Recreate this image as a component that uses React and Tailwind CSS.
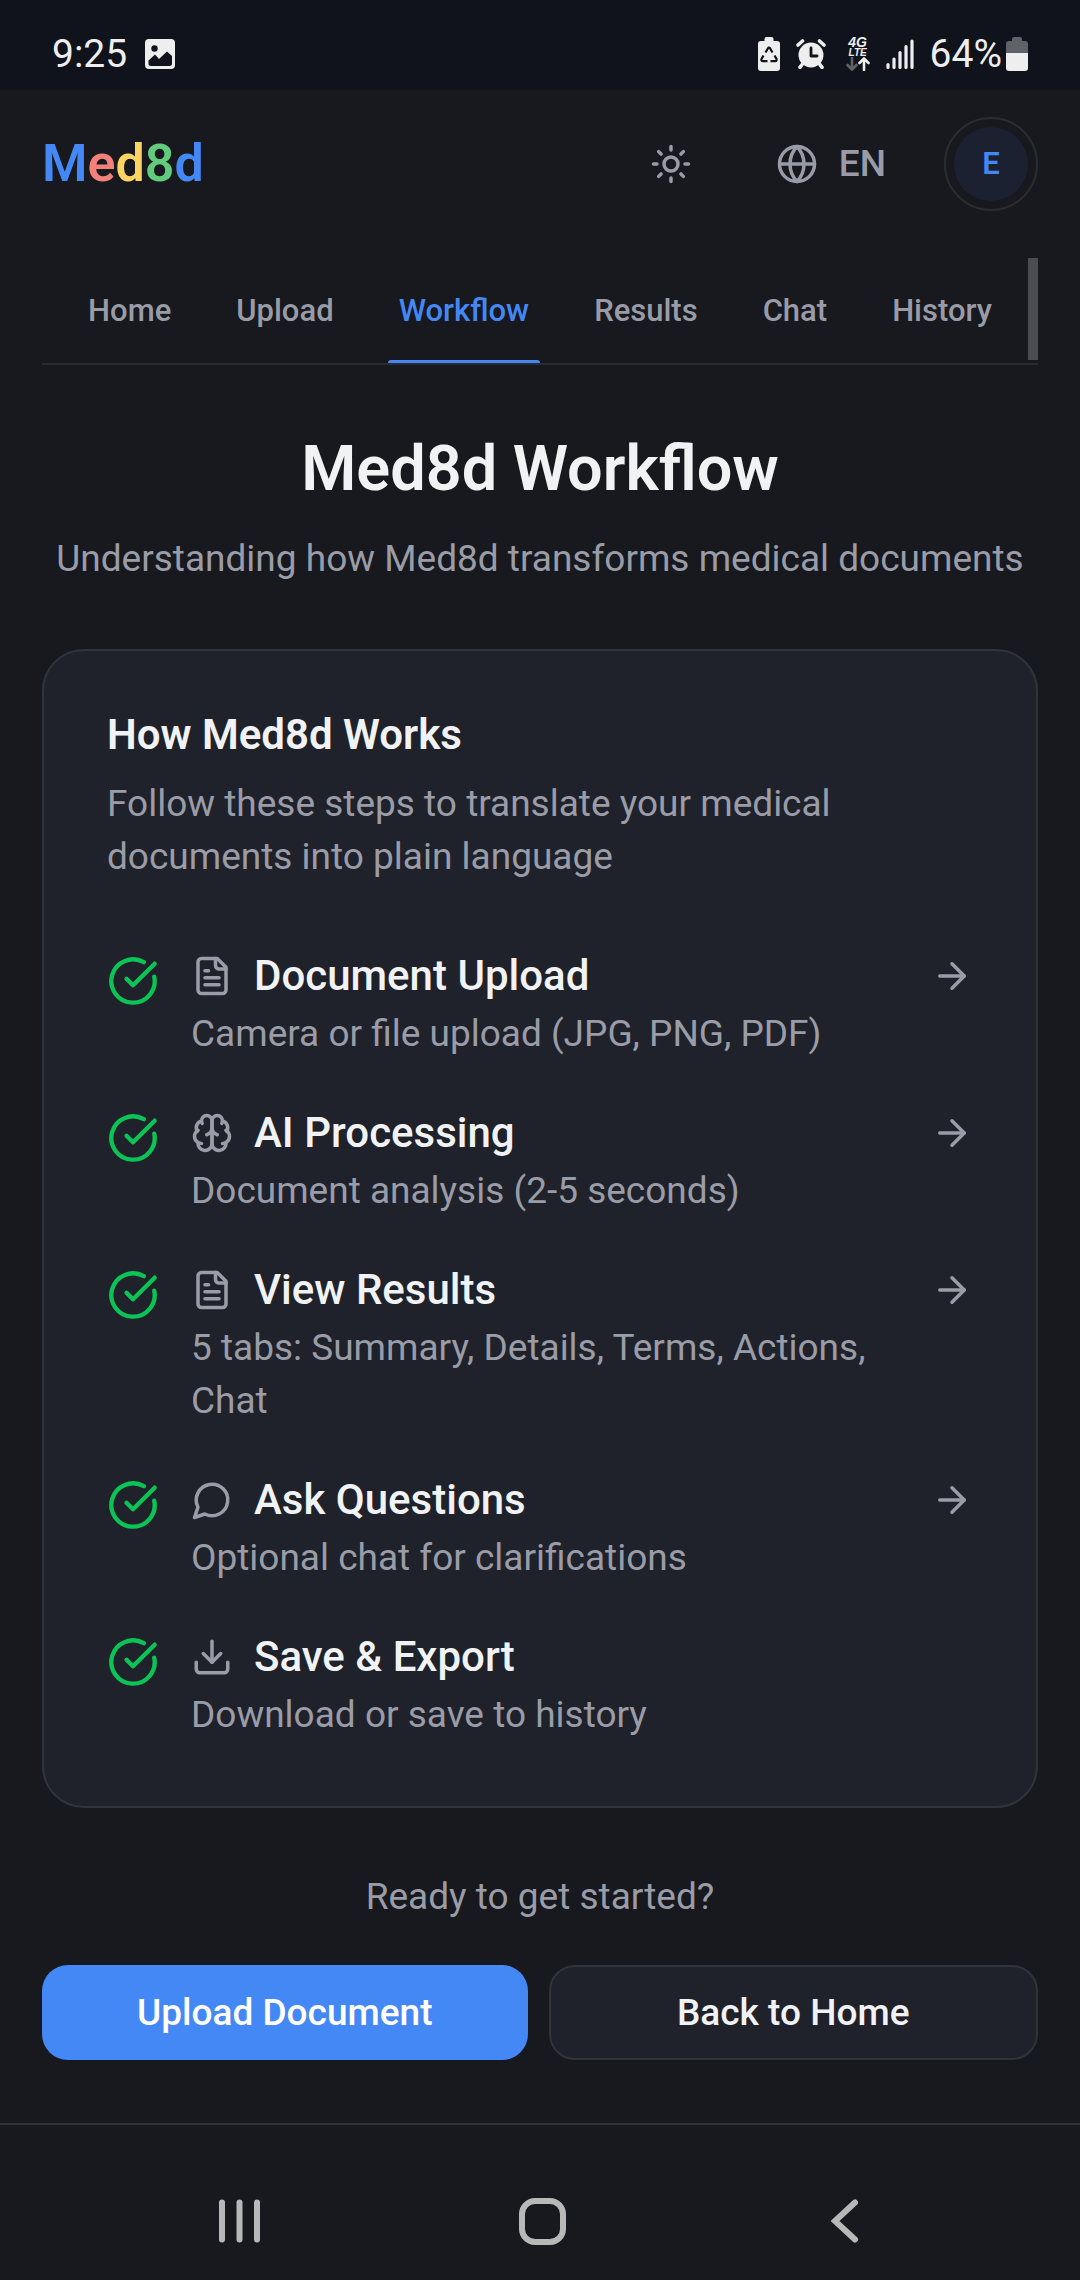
import React, { useState } from "react";
import { ArrowRight, CircleCheckBig, Download, Globe, Sun } from "lucide-react";

const LOGO = [
  { char: "M", color: "text-[#4488f5]" },
  { char: "e", color: "text-[#f28179]" },
  { char: "d", color: "text-[#fdd462]" },
  { char: "8", color: "text-[#61cd7c]" },
  { char: "d", color: "text-[#4488f5]" },
];

const TABS = ["Home", "Upload", "Workflow", "Results", "Chat", "History"];

// --- Icons ---
function LineIcon({ className, children }) {
  return (
    <svg
      viewBox="0 0 24 24"
      fill="none"
      stroke="currentColor"
      strokeWidth="2"
      strokeLinecap="round"
      strokeLinejoin="round"
      className={className}
      aria-hidden="true"
    >
      {children}
    </svg>
  );
}

function FileIcon({ className }) {
  return (
    <LineIcon className={className}>
      <path d="M15 2H6a2 2 0 0 0-2 2v16a2 2 0 0 0 2 2h12a2 2 0 0 0 2-2V7Z" />
      <path d="M14 2v4a2 2 0 0 0 2 2h4" />
      <path d="M10 9H8" />
      <path d="M16 13H8" />
      <path d="M16 17H8" />
    </LineIcon>
  );
}

function BrainIcon({ className }) {
  return (
    <LineIcon className={className}>
      <path d="M12 5a3 3 0 1 0-5.997.125 4 4 0 0 0-2.526 5.77 4 4 0 0 0 .556 6.588A4 4 0 1 0 12 18Z" />
      <path d="M12 5a3 3 0 1 1 5.997.125 4 4 0 0 1 2.526 5.77 4 4 0 0 1-.556 6.588A4 4 0 1 1 12 18Z" />
      <path d="M15 13a4.5 4.5 0 0 1-3-4 4.5 4.5 0 0 1-3 4" />
      <path d="M17.599 6.5a3 3 0 0 0 .399-1.375" />
      <path d="M6.003 5.125A3 3 0 0 0 6.401 6.5" />
      <path d="M3.477 10.896a4 4 0 0 1 .585-.396" />
      <path d="M19.938 10.5a4 4 0 0 1 .585.396" />
      <path d="M6 18a4 4 0 0 1-1.967-.516" />
      <path d="M19.967 17.484A4 4 0 0 1 18 18" />
    </LineIcon>
  );
}

function ChatIcon({ className }) {
  return (
    <LineIcon className={className}>
      <path d="M7.9 20A9 9 0 1 0 4 16.1L2 22Z" />
    </LineIcon>
  );
}

const STEPS = [
  { title: "Document Upload", text: "Camera or file upload (JPG, PNG, PDF)", icon: FileIcon },
  { title: "AI Processing", text: "Document analysis (2-5 seconds)", icon: BrainIcon },
  { title: "View Results", text: "5 tabs: Summary, Details, Terms, Actions, Chat", icon: FileIcon },
  { title: "Ask Questions", text: "Optional chat for clarifications", icon: ChatIcon },
  { title: "Save & Export", text: "Download or save to history", icon: Download },
];

// --- Phone status bar ---
function StatusBar() {
  return (
    <div className="flex h-[90px] items-center justify-between bg-[#10131b] px-[52px] pt-[18px] text-[39px] leading-[46px] text-[#eeeeee]">
      <div className="flex items-center gap-[18px]">
        <span>9:25</span>
        <svg viewBox="0 0 30 30" className="h-[30px] w-[30px]" aria-hidden="true">
          <rect width="30" height="30" rx="4" fill="currentColor" />
          <circle cx="9.5" cy="9.5" r="3.2" fill="#10131b" />
          <path d="M3.500 21.500L10 15.500L14 20L22 12.500L27 17V24.500A2.500 2.500 0 0 1 24.500 27H6A2.500 2.500 0 0 1 3.500 24.500Z" fill="#10131b" />
        </svg>
      </div>

      <div className="flex items-center">
        <svg viewBox="0 0 22 34" className="mr-4 h-[34px] w-[22px]" aria-hidden="true">
          <path d="M6.500 3V2a2 2 0 0 1 2-2h5a2 2 0 0 1 2 2v2H19a3 3 0 0 1 3 3v24a3 3 0 0 1-3 3H3a3 3 0 0 1-3-3V7a3 3 0 0 1 3-3h3.500Z" fill="currentColor" />
          <g fill="none" stroke="#10131b" strokeWidth="2.200" strokeLinejoin="round">
            <path d="M7.500 15.500L10 11.200q1-1.400 2 0l2.500 4.300" />
            <path d="M16.500 18.500l2 3.500q.600 2-1.500 2.200h-4.500" />
            <path d="M9.500 24.200H5q-2.100-.200-1.500-2.200l2-3.500" />
          </g>
        </svg>
        <svg viewBox="0 0 30 30" className="mr-5 h-[30px] w-[30px]" aria-hidden="true">
          <circle cx="15" cy="16" r="12.500" fill="currentColor" />
          <g stroke="currentColor" strokeWidth="3.600" strokeLinecap="round">
            <path d="M2 6L6.500 2" />
            <path d="M28 6L23.500 2" />
            <path d="M6.500 25L4 28.300" />
            <path d="M23.500 25L26 28.300" />
          </g>
          <path d="M15 9v8h6" fill="none" stroke="#10131b" strokeWidth="2.800" strokeLinecap="round" strokeLinejoin="round" />
        </svg>
        <div className="mr-4 flex w-[24px] flex-col items-center font-['Liberation_Sans',sans-serif] font-bold italic">
          <span className="text-[14px] leading-[11px]">4G</span>
          <span className="text-[10px] leading-[9px]">LTE</span>
          <svg viewBox="0 0 24 14" className="h-[14px] w-[24px]" aria-hidden="true">
            <g fill="none" strokeWidth="2.600" strokeLinecap="round" strokeLinejoin="round">
              <path d="M6 1v11M1.500 8L6 12.500L10.500 8" stroke="#606269" />
              <path d="M18 13V2M13.500 6L18 1.500L22.500 6" stroke="currentColor" />
            </g>
          </svg>
        </div>
        <svg viewBox="0 0 28 32" className="mr-4 h-[32px] w-[28px]" aria-hidden="true">
          <g stroke="currentColor" strokeWidth="3.200" strokeLinecap="round">
            <path d="M2 29.500V26.500" />
            <path d="M8 29.500V21" />
            <path d="M14 29.500V14.500" />
            <path d="M20 29.500V8.500" />
            <path d="M26 29.500V3" />
          </g>
        </svg>
        <span>64%</span>
        <svg viewBox="0 0 22 34" className="ml-1 h-[34px] w-[22px]" aria-hidden="true">
          <path d="M6 3V2a2 2 0 0 1 2-2h6a2 2 0 0 1 2 2v2h3a3 3 0 0 1 3 3v9H0V7a3 3 0 0 1 3-3h3Z" fill="#606269" />
          <path d="M0 16h22v15a3 3 0 0 1-3 3H3a3 3 0 0 1-3-3Z" fill="currentColor" />
        </svg>
      </div>
    </div>
  );
}

// --- App header ---
function Header() {
  return (
    <header className="flex h-[147px] items-center justify-between px-[42px]">
      <a href="#home" className="text-[52px] leading-[60px] font-semibold">
        {LOGO.map((part, i) => (
          <span key={i} className={part.color}>{part.char}</span>
        ))}
      </a>
      <div className="flex items-center text-[#999ca7]">
        <button type="button" aria-label="Toggle theme" className="p-[21px]">
          <Sun className="h-[42px] w-[42px]" />
        </button>
        <button type="button" className="ml-[21px] flex items-center gap-[21px] px-[42px] text-[37px] leading-[53px] font-medium">
          <Globe className="h-[42px] w-[42px]" />
          EN
        </button>
        <button
          type="button"
          aria-label="Account"
          className="ml-4 flex h-[94px] w-[94px] items-center justify-center rounded-full border-2 border-[#2b2d32]"
        >
          <span className="flex h-[74px] w-[74px] items-center justify-center rounded-full bg-[#1b2130] text-[31px] leading-[42px] font-semibold text-[#4488f5]">
            E
          </span>
        </button>
      </div>
    </header>
  );
}

function TabBar({ active, onSelect }) {
  return (
    <nav className="relative mx-[42px] mt-[21px] flex justify-center gap-[43px] border-b-2 border-[#292b30]">
      {TABS.map((tab) => (
        <button
          key={tab}
          type="button"
          onClick={() => onSelect(tab)}
          className={
            tab === active
              ? "relative h-[105px] px-[11px] text-[31px] leading-[42px] font-medium text-[#4488f5]"
              : "relative h-[105px] px-[11px] text-[31px] leading-[42px] font-medium text-[#999ca7]"
          }
        >
          {tab}
          {tab === active && (
            <span className="absolute inset-x-0 bottom-0 h-[3px] rounded-t-full bg-[#4488f5]" />
          )}
        </button>
      ))}
      {/* scroll thumb */}
      <span className="absolute top-0 right-0 h-[102px] w-[10px] bg-[#4c4d50]" />
    </nav>
  );
}

function Step({ step, last }) {
  const Icon = step.icon;
  return (
    <li className="flex items-start gap-[32px]">
      <CircleCheckBig className="mt-[11px] h-[52px] w-[52px] shrink-0 text-[#0bc455]" />
      <div className="min-w-0 flex-1">
        <div className="flex items-center gap-[21px]">
          <Icon className="h-[42px] w-[42px] shrink-0 text-[#9a9ca8]" />
          <h3 className="text-[42px] leading-[63px] font-medium">{step.title}</h3>
        </div>
        <p className="text-[37px] leading-[53px] text-[#9a9ca8]">{step.text}</p>
      </div>
      {!last && <ArrowRight className="mt-[11px] h-[42px] w-[42px] shrink-0 text-[#9a9ca8]" />}
    </li>
  );
}

// --- Android navigation bar ---
function SystemNav() {
  return (
    <div className="flex flex-1 items-center justify-center border-t-2 border-[#303339] pt-9 pl-1 text-[#b8b8b8]">
      <div className="flex gap-[254px]">
        <button type="button" aria-label="Recent apps">
          <svg viewBox="0 0 48 48" className="h-[48px] w-[48px]" fill="none" stroke="currentColor" strokeWidth="6" strokeLinecap="round">
            <path d="M6 5.500V42.500M23.500 5.500V42.500M41 5.500V42.500" />
          </svg>
        </button>
        <button type="button" aria-label="Home screen">
          <svg viewBox="0 0 48 48" className="h-[48px] w-[48px]" fill="none" stroke="currentColor" strokeWidth="6">
            <rect x="4" y="4" width="41" height="41" rx="13" />
          </svg>
        </button>
        <button type="button" aria-label="Back">
          <svg viewBox="0 0 48 48" className="h-[48px] w-[48px]" fill="none" stroke="currentColor" strokeWidth="6" strokeLinecap="round">
            <path d="M35 5.500L15 24L35 42.500" />
          </svg>
        </button>
      </div>
    </div>
  );
}

function App() {
  const [activeTab, setActiveTab] = useState("Workflow");

  return (
    <div className="flex min-h-screen flex-col bg-[#17191e] font-[Roboto,sans-serif] text-[#f1f2f4]">
      <StatusBar />
      <Header />
      <TabBar active={activeTab} onSelect={setActiveTab} />

      <main className="px-[42px] pt-[62px] pb-[63px]">
        <div className="text-center">
          <h1 className="text-[63px] leading-[84px] font-semibold">Med8d Workflow</h1>
          <p className="mt-[21px] text-[37px] leading-[53px] whitespace-nowrap text-[#9a9ca8]">
            Understanding how Med8d transforms medical documents
          </p>
        </div>

        <section className="mt-16 rounded-[42px] border-2 border-[#30343b] bg-[#1f222a] px-[63px] pt-[63px] pb-[65px]">
          <h2 className="text-[42px] leading-[42px] font-semibold">How Med8d Works</h2>
          <p className="mt-[21px] text-[37px] leading-[53px] text-[#9a9ca8]">
            Follow these steps to translate your medical documents into plain language
          </p>
          <ul className="mt-[61px] flex flex-col gap-[41px]">
            {STEPS.map((step, i) => (
              <Step key={step.title} step={step} last={i === STEPS.length - 1} />
            ))}
          </ul>
        </section>

        <p className="mt-[62px] text-center text-[37px] leading-[53px] text-[#9a9ca8]">
          Ready to get started?
        </p>
        <div className="mt-[42px] flex gap-[21px] text-[37px] leading-[53px] font-medium">
          <button type="button" className="h-[95px] flex-1 rounded-[26px] bg-[#4488f5] text-white">
            Upload Document
          </button>
          <button type="button" className="h-[95px] flex-1 rounded-[26px] border-2 border-[#30343b] bg-[#1f222a]">
            Back to Home
          </button>
        </div>
      </main>

      <SystemNav />
    </div>
  );
}

export default App;
